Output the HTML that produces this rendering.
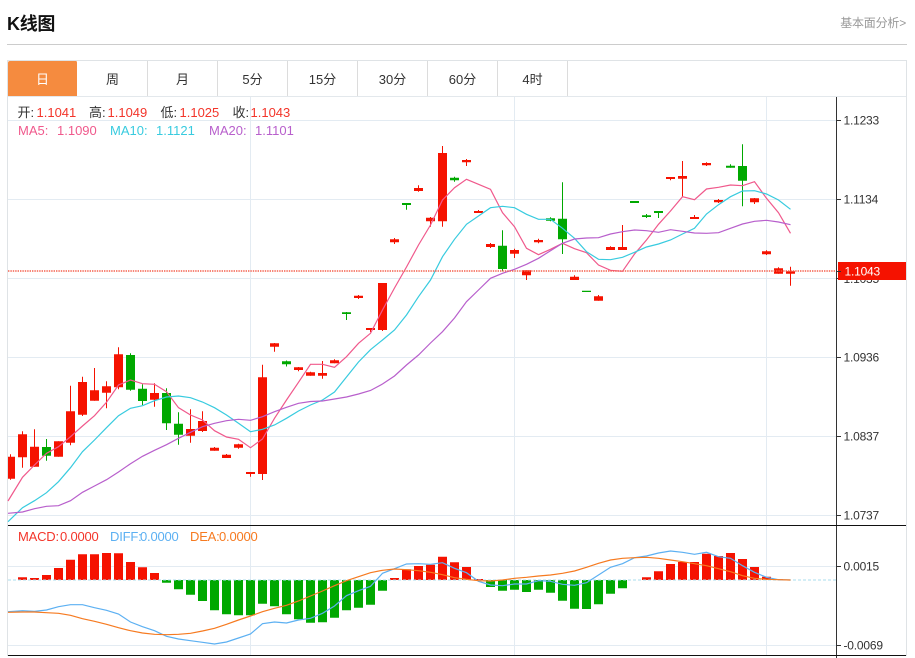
<!DOCTYPE html>
<html lang="zh-CN">
<head>
<meta charset="utf-8">
<title>K线图</title>
<style>
html,body{margin:0;padding:0;background:#fff;width:915px;height:658px;overflow:hidden}
body{position:relative;font-family:"Liberation Sans","Noto Sans CJK SC",sans-serif;color:#333}
.title{position:absolute;left:7px;top:11px;font-size:18px;line-height:26px;font-weight:bold;color:#111;letter-spacing:-.3px}
.more{position:absolute;right:9px;top:14px;font-size:12px;line-height:18px;color:#999;letter-spacing:-.2px}
.sep{position:absolute;left:7px;top:44px;width:900px;height:1px;background:#ccc}
.tabs{position:absolute;left:7px;top:60px;width:898px;border:1px solid #dfe3e6;border-bottom:1px solid #e3e8ec;box-sizing:content-box;height:35px;display:flex}
.tab{width:69px;height:35px;line-height:37px;text-align:center;font-size:13px;border-right:1px solid #dcdcdc;color:#333}
.tab.on{background:#f58b3f;color:#fff;border-right:1px solid #fff;border-radius:2px 2px 0 0}
svg{position:absolute;left:0;top:0}
text{font-family:"Liberation Sans","Noto Sans CJK SC",sans-serif}
</style>
</head>
<body>
<div class="title">K线图</div>
<div class="more">基本面分析&gt;</div>
<div class="sep"></div>
<div class="tabs">
<div class="tab on">日</div><div class="tab">周</div><div class="tab">月</div><div class="tab">5分</div><div class="tab">15分</div><div class="tab">30分</div><div class="tab">60分</div><div class="tab">4时</div>
</div>
<svg width="915" height="658" viewBox="0 0 915 658" xmlns="http://www.w3.org/2000/svg">
<!-- frame -->
<path d="M7.5 97V656M906.5 61V656" stroke="#dfe3e6" fill="none"/>
<!-- grid -->
<path d="M8 120.5H836M8 199.5H836M8 278.5H836M8 357.5H836M8 436.5H836M8 515.5H836M8 566.5H836M8 645.5H836M250.5 97V656M514.5 97V656M766.5 97V656" stroke="#e3ebf2" fill="none"/>
<!-- wicks red -->
<path fill="none" stroke="#f51200" stroke-width="1" d="M10.5 454.3V479.7M22.5 431.3V467.7M34.5 429.3V466.7M58.5 441.3V456.7M70.5 385.7V445.3M82.5 376.7V416M94.5 368V400.7M106.5 381.3V408.3M118.5 347.3V389.3M154.5 383.3V406.7M190.5 409.3V442.7M202.5 411.3V432M214.5 447V450.7M226.5 454V458M238.5 443.7V448.7M250.5 472V476.7M262.5 364.7V480M274.5 343V351.7M298.5 367V371.3M310.5 371.7V375.7M322.5 361V378.7M334.5 359.3V363.3M358.5 295V299M370.5 328V332M382.5 283V331M394.5 238V244M418.5 185.3V191.7M430.5 217V226.7M442.5 146V226.7M466.5 159V166M478.5 210V213M490.5 243V248M514.5 248.7V258M526.5 270.3V280M538.5 238.7V243.3M574.5 275.3V280M598.5 295V300.7M610.5 246.3V250M622.5 225V250M670.5 177V180.3M682.5 161V196.7M694.5 215V219M706.5 162.3V166M718.5 199V203M754.5 198V204M766.5 250.3V255M778.5 267.3V273.7M790.5 266.7V285.7"/>
<!-- bodies red -->
<path fill="#f51200" d="M8 456.7h7V478.7h-7zM18 434.3h9V457.3h-9zM30 446.7h9V466.7h-9zM54 441.3h9V456.7h-9zM66 411.3h9V442.7h-9zM78 382h9V414.7h-9zM90 390.3h9V400.7h-9zM102 386.3h9V392.7h-9zM114 354.3h9V387.3h-9zM150 393h9V399.7h-9zM186 429h9V435.7h-9zM198 421h9V431h-9zM210 447.7h9V450.7h-9zM222 454.7h9V458h-9zM234 444.3h9V447.7h-9zM246 472h9V474h-9zM258 377.3h9V474h-9zM270 343.3h9V346.7h-9zM294 367.3h9V370h-9zM306 372.3h9V375.7h-9zM318 373h9V375.7h-9zM330 360.3h9V363.3h-9zM354 295.7h9V298h-9zM366 328h9V330h-9zM378 283h9V330h-9zM390 239.3h9V242.3h-9zM414 188h9V191h-9zM426 217.7h9V221.3h-9zM438 153h9V221.3h-9zM462 160h9V162.3h-9zM474 211h9V213h-9zM486 244h9V247h-9zM510 250h9V253.7h-9zM522 270.3h9V275.3h-9zM534 240h9V242.3h-9zM570 276.7h9V280h-9zM594 296.3h9V300.7h-9zM606 247h9V250h-9zM618 247h9V250h-9zM666 177h9V179h-9zM678 176h9V178.7h-9zM690 217h9V219h-9zM702 163h9V165.3h-9zM714 200h9V202.3h-9zM750 198.3h9V202.3h-9zM762 251.3h9V254.3h-9zM774 268.3h9V273.7h-9zM786 271.3h9V273.7h-9z"/>
<!-- wicks green -->
<path fill="none" stroke="#00a800" stroke-width="1" d="M46.5 439V460.7M130.5 353.3V390.7M142.5 384.3V405M166.5 388.3V430M178.5 412.3V444.7M286.5 360.5V366.5M346.5 312V320M406.5 203V209.7M454.5 176.7V181.7M502.5 230.3V271.3M550.5 217.3V221.3M562.5 182.3V254M646.5 214V218M658.5 211V218M730.5 164.3V167.7M742.5 144.3V206.3"/>
<!-- bodies green -->
<path fill="#00a800" d="M42 447h9V455.7h-9zM126 355h9V389.7h-9zM138 388.7h9V401h-9zM162 393h9V423.3h-9zM174 423.7h9V434.7h-9zM282 361.3h9V364.3h-9zM342 312.3h9V314h-9zM402 203h9V205h-9zM450 177.7h9V180.3h-9zM498 245.7h9V269h-9zM546 218.3h9V220.7h-9zM558 218.7h9V239.3h-9zM582 290.7h9V292h-9zM630 201h9V203h-9zM642 215.3h9V217h-9zM654 211h9V213h-9zM726 165.7h9V167.7h-9zM738 166h9V180.7h-9z"/>
<!-- MA lines -->
<polyline fill="none" stroke="#f0598c" stroke-width="1.2" points="8,501 22.5,477.3 34.5,465 46.5,453.3 58.5,446.7 70.5,436.7 82.5,426 94.5,415.7 106.5,402.3 118.5,385 130.5,380 142.5,383.7 154.5,384.3 166.5,391.7 178.5,407.7 190.5,415 202.5,420 214.5,430.7 226.5,437 238.5,439.3 250.5,447.7 262.5,439 274.5,418.3 286.5,400 298.5,382.3 310.5,364.3 322.5,364.3 334.5,367.3 346.5,356.7 358.5,343.3 370.5,333.3 382.5,310 394.5,288 406.5,267 418.5,245 430.5,225 442.5,200 454.5,187.7 466.5,179.3 478.5,184.3 490.5,189.3 502.5,212.7 514.5,226.7 526.5,248.3 538.5,254.7 550.5,249.3 562.5,243.3 574.5,248.7 586.5,252.7 598.5,265 610.5,270.3 622.5,271.3 634.5,254 646.5,240 658.5,224.3 670.5,211 682.5,196.7 694.5,199.7 706.5,189 718.5,187.3 730.5,185 742.5,185.7 754.5,181.7 766.5,198.3 778.5,212.7 790.5,233.3"/>
<polyline fill="none" stroke="#38cbdf" stroke-width="1.2" points="8,521.7 22.5,507.7 34.5,500.7 46.5,492.7 58.5,481.7 70.5,467.7 82.5,451.7 94.5,440 106.5,427.7 118.5,415.7 130.5,408.3 142.5,405.7 154.5,400.7 166.5,397 178.5,396 190.5,397.7 202.5,402 214.5,407.7 226.5,415 238.5,423.3 250.5,431.7 262.5,429.3 274.5,425 286.5,418.3 298.5,411 310.5,405 322.5,400 334.5,392 346.5,377 358.5,362 370.5,349.7 382.5,340 394.5,330 406.5,315 418.5,296.7 430.5,280 442.5,256.7 454.5,239.3 466.5,224.3 478.5,216 490.5,207.7 502.5,206.3 514.5,207.7 526.5,214.3 538.5,219.3 550.5,219.3 562.5,228.3 574.5,238.3 586.5,251.7 598.5,259.3 610.5,259.7 622.5,257.3 634.5,252.3 646.5,247 658.5,244 670.5,240 682.5,234 694.5,228.3 706.5,214 718.5,204.7 730.5,196.7 742.5,191 754.5,190.7 766.5,194 778.5,200 790.5,209.3"/>
<polyline fill="none" stroke="#b85fcc" stroke-width="1.2" points="8,513.3 22.5,512 34.5,508.7 46.5,506.3 58.5,505.7 70.5,500.7 82.5,492.3 94.5,486 106.5,479.7 118.5,472 130.5,463.7 142.5,456.3 154.5,450.3 166.5,444.7 178.5,438.3 190.5,432.3 202.5,426.7 214.5,423.3 226.5,420.7 238.5,419.3 250.5,420.3 262.5,416.7 274.5,411.7 286.5,407.3 298.5,403.3 310.5,401.5 322.5,401 334.5,399 346.5,397 358.5,394 370.5,390.5 382.5,384 394.5,376 406.5,365 418.5,355 430.5,343 442.5,331.7 454.5,318 466.5,301.7 478.5,290 490.5,278.3 502.5,273.3 514.5,269.3 526.5,264.3 538.5,258.3 550.5,250.7 562.5,243.3 574.5,239 586.5,238 598.5,237.7 610.5,234 622.5,231.7 634.5,230 646.5,230.7 658.5,232.3 670.5,229.7 682.5,231.3 694.5,233 706.5,233.3 718.5,232.7 730.5,228.3 742.5,224 754.5,221.3 766.5,220.3 778.5,222 790.5,224.7"/>
<!-- last price line -->
<line x1="8" y1="271" x2="836" y2="271" stroke="#f4604e" stroke-width="1.4" stroke-dasharray="1.4 1"/>
<!-- axis -->
<path d="M836.5 97V658" stroke="#333" fill="none"/>
<path d="M8 525.5H906M8 655.5H906" stroke="#111" fill="none"/>
<path d="M837 120.5H841M837 199.5H841M837 278.5H841M837 357.5H841M837 436.5H841M837 515.5H841M837 566.5H841M837 645.5H841" stroke="#333" fill="none"/>
<g font-size="12" fill="#333" letter-spacing="-.2">
<text x="843.5" y="124.5">1.1233</text>
<text x="843.5" y="203.5">1.1134</text>
<text x="843.5" y="283">1.1035</text>
<text x="843.5" y="361.5">1.0936</text>
<text x="843.5" y="440.5">1.0837</text>
<text x="843.5" y="519.5">1.0737</text>
<text x="843.5" y="570.5">0.0015</text>
<text x="843.5" y="649.5">-0.0069</text>
</g>
<rect x="838" y="262" width="68" height="18" fill="#f51200"/>
<path d="M837 271.5H841" stroke="#333"/>
<text x="844.5" y="275.5" font-size="12" fill="#fff" letter-spacing="-.2">1.1043</text>
<!-- MACD bars -->
<path fill="#f51200" d="M18 577.3h9V580h-9zM30 578h9V580h-9zM42 575h9V580h-9zM54 568h9V580h-9zM66 559.7h9V580h-9zM78 554.3h9V580h-9zM90 554.3h9V580h-9zM102 553h9V580h-9zM114 553.3h9V580h-9zM126 562h9V580h-9zM138 567.3h9V580h-9zM150 573h9V580h-9zM390 578h9V580h-9zM402 569.3h9V580h-9zM414 566h9V580h-9zM426 564.7h9V580h-9zM438 556.7h9V580h-9zM450 562.3h9V580h-9zM462 567h9V580h-9zM474 579h9V580h-9zM642 577.3h9V580h-9zM654 571.3h9V580h-9zM666 564h9V580h-9zM678 562h9V580h-9zM690 562h9V580h-9zM702 553.7h9V580h-9zM714 556h9V580h-9zM726 553h9V580h-9zM738 559h9V580h-9zM750 567h9V580h-9zM762 576.7h9V580h-9zM774 579.3h9V580h-9z"/>
<path fill="#00a800" d="M162 580h9V582.7h-9zM174 580h9V589.3h-9zM186 580h9V594.7h-9zM198 580h9V601h-9zM210 580h9V610.3h-9zM222 580h9V614.3h-9zM234 580h9V615.3h-9zM246 580h9V615.3h-9zM258 580h9V603.7h-9zM270 580h9V606.3h-9zM282 580h9V614.3h-9zM294 580h9V619.3h-9zM306 580h9V622.7h-9zM318 580h9V622.3h-9zM330 580h9V617.7h-9zM342 580h9V610.3h-9zM354 580h9V607.7h-9zM366 580h9V604.7h-9zM378 580h9V590.7h-9zM486 580h9V587h-9zM498 580h9V590.7h-9zM510 580h9V589.7h-9zM522 580h9V592h-9zM534 580h9V589.7h-9zM546 580h9V592.7h-9zM558 580h9V600.7h-9zM570 580h9V608.7h-9zM582 580h9V609h-9zM594 580h9V604.3h-9zM606 580h9V593.7h-9zM618 580h9V588.3h-9z"/>
<line x1="8" y1="580" x2="836" y2="580" stroke="#a9dcec" stroke-width="1" stroke-dasharray="3 2"/>
<polyline fill="none" stroke="#5cb0f2" stroke-width="1.2" points="8,611.7 22.5,610.7 34.5,611.3 46.5,610 58.5,606.7 70.5,604.7 82.5,604.7 94.5,607.7 106.5,610.3 118.5,614 130.5,622 142.5,626.7 154.5,630.7 166.5,636.3 178.5,639 190.5,640.7 202.5,642.3 214.5,644 226.5,642 238.5,638 250.5,634 262.5,623.7 274.5,622 286.5,623 298.5,620 310.5,618.3 322.5,613.3 334.5,606 346.5,595.7 358.5,590.7 370.5,586.3 382.5,573.3 394.5,568.7 406.5,564 418.5,563.7 430.5,564.3 442.5,562.7 454.5,568.3 466.5,572.7 478.5,581.3 490.5,585 502.5,585.7 514.5,584 526.5,584 538.5,580.7 550.5,581.3 562.5,584.3 574.5,585.3 586.5,582.7 598.5,575 610.5,567.3 622.5,563.7 634.5,557.7 646.5,556 658.5,553 670.5,551 682.5,552.3 694.5,554.3 706.5,552.3 718.5,556.7 730.5,558.3 742.5,565.7 754.5,572.3 766.5,577.3 778.5,579.7 790.5,580"/>
<polyline fill="none" stroke="#f67a20" stroke-width="1.2" points="8,612.3 22.5,612 34.5,612 46.5,612.7 58.5,613.3 70.5,615.3 82.5,618.7 94.5,621.3 106.5,624.3 118.5,627.7 130.5,630.7 142.5,633 154.5,634.3 166.5,634.7 178.5,634.3 190.5,633.3 202.5,631 214.5,628.3 226.5,624.3 238.5,620 250.5,616 262.5,611.7 274.5,608.3 286.5,605.3 298.5,601 310.5,596 322.5,591 334.5,585.7 346.5,580.7 358.5,576.7 370.5,572.7 382.5,570.3 394.5,569 406.5,569.7 418.5,570.7 430.5,572.3 442.5,574.7 454.5,577.7 466.5,579.3 478.5,580.7 490.5,581 502.5,580 514.5,578.3 526.5,577.3 538.5,576 550.5,575 562.5,573.3 574.5,571 586.5,567.3 598.5,563.3 610.5,560 622.5,558.3 634.5,557.7 646.5,557.3 658.5,558.3 670.5,560 682.5,561.7 694.5,563.7 706.5,565.7 718.5,568.7 730.5,571.7 742.5,575.7 754.5,578.3 766.5,579.3 778.5,579.7 790.5,580"/>
<!-- legends -->
<g font-size="13">
<text x="17.5" y="117" fill="#333">开:</text><text x="36.5" y="117" fill="#f3352a">1.1041</text>
<text x="89" y="117" fill="#333">高:</text><text x="107.5" y="117" fill="#f3352a">1.1049</text>
<text x="160.5" y="117" fill="#333">低:</text><text x="179.5" y="117" fill="#f3352a">1.1025</text>
<text x="232.5" y="117" fill="#333">收:</text><text x="250.5" y="117" fill="#f3352a">1.1043</text>
<text x="18" y="135" fill="#f0598c">MA5:</text><text x="57" y="135" fill="#f0598c">1.1090</text>
<text x="110" y="135" fill="#38cbdf">MA10:</text><text x="156" y="135" fill="#38cbdf">1.1121</text>
<text x="209" y="135" fill="#b85fcc">MA20:</text><text x="255" y="135" fill="#b85fcc">1.1101</text>
</g>
<g font-size="13" letter-spacing="-.2">
<text x="18" y="541" fill="#f3352a">MACD:</text><text x="60" y="541" fill="#f3352a">0.0000</text>
<text x="110" y="541" fill="#5cb0f2">DIFF:</text><text x="140" y="541" fill="#5cb0f2">0.0000</text>
<text x="190" y="541" fill="#f67a20">DEA:</text><text x="219" y="541" fill="#f67a20">0.0000</text>
</g>
</svg>
</body>
</html>
